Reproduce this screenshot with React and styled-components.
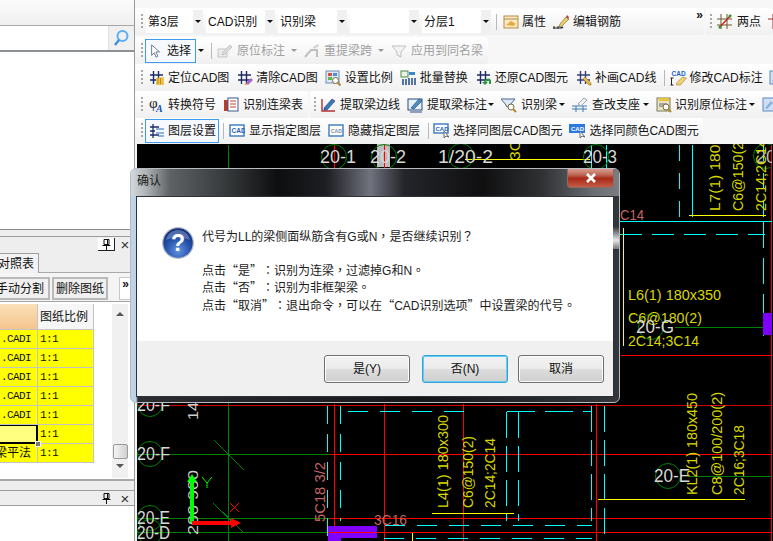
import React from 'react';
import styled, { createGlobalStyle } from 'styled-components';

const Global = createGlobalStyle`
  html, body { margin: 0; padding: 0; background: #f4f4f4; }
  * { box-sizing: border-box; }
`;

const FONT = `"Liberation Sans", "Noto Sans CJK SC", sans-serif`;

const Page = styled.div`
  position: relative;
  width: 773px;
  height: 541px;
  overflow: hidden;
  display: flex;
  font: 12px/16px ${FONT};
  color: #111;
  background: #f6f6f6;
`;

/* ---------- left column ---------- */
const LeftColumn = styled.div`
  width: 135px;
  flex: none;
  display: flex;
  flex-direction: column;
  border-right: 1px solid #9a9a9a;
  background: #eeeeee;
`;
const TopFade = styled.div`
  height: 25px;
  background: linear-gradient(#fbfbfb, #f0f0f0);
`;
const SearchRow = styled.div`
  height: 25px;
  display: flex;
  border-top: 1px solid #a8a8a8;
  background: #f0f0f0;
`;
const SearchInput = styled.div`
  width: 109px;
  background: #fff;
  border-right: 1px solid #e0e0e0;
`;
const SearchIcon = styled.div`
  flex: 1;
  display: flex;
  align-items: center;
  justify-content: center;
  padding-right: 2px;
`;
const TreeArea = styled.div`
  height: 180px;
  background: #fff;
  border-top: 2px solid #8d9196;
  border-bottom: 1px solid #8a8a8a;
`;
const PanelHeader = styled.div`
  display: flex;
  align-items: center;
  justify-content: flex-end;
  height: ${p => p.$h}px;
  margin-top: ${p => p.$mt}px;
  border-top: 1px solid #9c9c9c;
  padding-right: 1px;
  background: #eeeeee;
`;
const PinBox = styled.div`
  width: 17px;
  height: 13px;
  display: flex;
  align-items: center;
  justify-content: center;
  border-right: ${p => (p.$framed ? '1px solid #222' : 'none')};
  border-bottom: ${p => (p.$framed ? '1px solid #222' : 'none')};
  background: ${p => (p.$framed ? '#fff' : 'transparent')};
`;
const CloseMark = styled.span`
  width: 16px;
  text-align: center;
  font: 15px/13px "Liberation Sans", sans-serif;
  color: #333;
  margin-left: 2px;
`;
const TabRow = styled.div`
  height: 20px;
  margin-top: 1px;
  border-bottom: 1px solid #aaa;
`;
const Tab = styled.div`
  width: 39px;
  height: 20px;
  display: flex;
  justify-content: flex-end;
  align-items: center;
  padding-right: 4px;
  overflow: hidden;
  white-space: nowrap;
  background: #f2f2f2;
  border: 1px solid #a0a0a0;
  border-left: none;
  border-bottom: none;
`;
const ActionRow = styled.div`
  height: 29px;
  display: flex;
  align-items: flex-start;
  padding-top: 4px;
  background: #f4f4f4;
  border-bottom: 1px solid #a4a4a4;
`;
const FlatButton = styled.div`
  width: ${p => p.$w}px;
  height: 23px;
  margin-right: 2px;
  display: flex;
  align-items: center;
  justify-content: ${p => (p.$cut ? 'flex-end' : 'center')};
  padding-right: ${p => (p.$cut ? 4 : 0)}px;
  overflow: hidden;
  white-space: nowrap;
  background: #f0f0f0;
  border: 2px solid #b9b9b9;
  border-left-width: ${p => (p.$cut ? 0 : 2)}px;
`;
const Overflow = styled.div`
  width: 13px;
  height: 23px;
  margin-left: 9px;
  background: #fff;
  border: 1px solid #c8c8c8;
  font: bold 12px/12px "Liberation Sans", sans-serif;
  text-align: center;
`;
const GridWrap = styled.div`
  height: 179px;
  display: flex;
  padding: 2px 1px 0 0;
  background: #fff;
  border-bottom: 2px solid #a8a8a8;
`;
const Sheet = styled.div`
  position: relative;
  width: 94px;
  align-self: flex-start;
  display: grid;
  grid-template-columns: 38px 56px;
  grid-template-rows: 26px repeat(7, 19px);
`;
const HeadCell = styled.div`
  display: flex;
  align-items: center;
  padding-left: 2px;
  font-size: 12px;
  background: ${p => (p.$warm ? 'linear-gradient(#fbe0b8, #f5c58e)' : '#f6f6f6')};
  border-right: 1px solid #c4c4c4;
  border-bottom: 1px solid #c4c4c4;
`;
const Cell = styled.div`
  height: 19px;
  display: flex;
  align-items: center;
  justify-content: ${p => (p.$right ? 'flex-end' : 'flex-start')};
  padding: ${p => (p.$right ? '0 6px 0 0' : '0 0 0 2px')};
  overflow: hidden;
  white-space: nowrap;
  font: 11px/16px "Liberation Mono", monospace;
  letter-spacing: -0.6px;
  background: ${p => (p.$selected ? '#ffff80' : '#ffff00')};
  border-right: ${p => (p.$selected ? '2px solid #000' : '1px solid #c4c4c4')};
  border-bottom: ${p => (p.$selected ? '2px solid #000' : '1px solid #c4c4c4')};
  border-top: ${p => (p.$selected ? '1px solid #000' : 'none')};
`;
const CellCJK = styled.span`
  font: 12px/16px ${FONT};
  letter-spacing: 0;
`;
const Handle = styled.div`
  position: absolute;
  left: 35px;
  top: 137px;
  width: 6px;
  height: 6px;
  background: #777;
  border: 1px solid #fff;
`;
const ScrollArea = styled.div`
  flex: 1;
  display: flex;
  justify-content: flex-end;
  padding-right: 5px;
`;
const Scrollbar = styled.div`
  width: 16px;
  height: 174px;
  display: flex;
  flex-direction: column;
  align-items: center;
  background: #f0f0f0;
  padding: 8px 0 6px;
`;
const ScrollFill = styled.div`
  flex: 1;
`;
const Thumb = styled.div`
  width: 15px;
  height: 15px;
  margin-bottom: 5px;
  border: 1px solid #9a9a9a;
  border-radius: 2px;
  background: linear-gradient(90deg, #f4f4f4, #d0d0d0);
`;
const Arrow = styled.div`
  width: 0;
  height: 0;
  border-left: 4px solid transparent;
  border-right: 4px solid transparent;
  border-${p => (p.$down ? 'top' : 'bottom')}: 4px solid #555;
  margin-bottom: 4px;
`;
const BottomPanel = styled.div`
  flex: 1;
  background: #fff;
  border-top: 1px solid #9c9c9c;
`;

/* ---------- right column ---------- */
const RightColumn = styled.div`
  flex: 1;
  min-width: 0;
  display: flex;
  flex-direction: column;
`;
const Toolbars = styled.div`
  height: 144px;
  padding-top: 8px;
  display: flex;
  flex-direction: column;
  background: #f7f7f7;
  overflow: hidden;
`;
const Row = styled.div`
  height: ${p => p.$h || 27}px;
  margin-bottom: ${p => p.$mb || 0}px;
  display: flex;
  gap: 2px;
  flex: none;
`;
const Bar = styled.div`
  width: ${p => (p.$w ? `${p.$w}px` : 'auto')};
  flex: ${p => (p.$grow ? 1 : 'none')};
  height: 100%;
  display: flex;
  align-items: center;
  padding-left: ${p => p.$pl ?? 6}px;
  overflow: hidden;
  white-space: nowrap;
  border-radius: 3px;
  background: linear-gradient(#ffffff, #f0f0f0);
`;
const Grip = styled.div`
  width: 2px;
  height: 16px;
  margin-right: 3px;
  flex: none;
  background: repeating-linear-gradient(#a8a8a8 0 2px, transparent 2px 4px);
`;
const Tool = styled.div`
  display: flex;
  align-items: center;
  flex: none;
  height: 24px;
  gap: ${p => p.$gap ?? 4}px;
  margin-left: ${p => p.$ml ?? 0}px;
  padding: ${p => (p.$active ? `0 ${p.$pr ?? 2}px 0 3px` : '0')};
  color: ${p => (p.$off ? '#a0a0a0' : '#141414')};
  border: ${p => (p.$active ? '1px solid #3f9bf0' : 'none')};
  background: ${p => (p.$active ? '#f6fafe' : 'transparent')};
`;
const Caret = styled.i`
  width: 0;
  height: 0;
  flex: none;
  margin-left: ${p => p.$ml ?? 4}px;
  margin-right: ${p => p.$mr ?? 0}px;
  border-left: 3px solid transparent;
  border-right: 3px solid transparent;
  border-top: 3px solid ${p => (p.$off ? '#999' : '#111')};
`;
const Sep = styled.div`
  width: 1px;
  height: 16px;
  flex: none;
  margin: 0 ${p => p.$mr ?? 5}px 0 ${p => p.$ml ?? 5}px;
  background: #b8b8b8;
`;
const Combo = styled.div`
  width: ${p => p.$w}px;
  height: 23px;
  margin-right: 3px;
  flex: none;
  display: flex;
  align-items: center;
  justify-content: space-between;
  padding-left: 2px;
  background: #fff;
`;
const ComboDrop = styled.div`
  width: 10px;
  height: 100%;
  display: flex;
  align-items: center;
  justify-content: center;
  background: #f0f0f0;
`;
const More = styled.div`
  margin-left: auto;
  margin-right: 1px;
  align-self: flex-start;
  padding-top: 1px;
  font: bold 12px/12px "Liberation Sans", sans-serif;
`;
const Canvas = styled.div`
  flex: 1;
  margin-left: 2px;
  background: #000;
  overflow: hidden;
  svg { display: block; }
`;

/* ---------- dialog ---------- */
const Dialog = styled.div`
  position: absolute;
  left: 130px;
  top: 168px;
  width: 490px;
  height: 235px;
  display: flex;
  flex-direction: column;
  border-radius: 6px;
  border: 1px solid #b8bcc0;
  overflow: hidden;
  background: linear-gradient(90deg, #bcd3ea 0 5px, #2b2d30 7px, #151618 60%, #33363a 100%);
`;
const Glare = styled.div`
  position: absolute;
  right: 0;
  top: 58px;
  width: 6px;
  height: 22px;
  background: linear-gradient(#3a3a3a, #e8e8e8 60%, #777);
`;
const TitleBar = styled.div`
  position: relative;
  height: 27px;
  flex: none;
  padding: 4px 0 0 6px;
  font-size: 12px;
  color: #1a1a1a;
  background: linear-gradient(90deg, #d3dade 0, #b0b4b6 3%, #5f6264 8%, #3c3f41 18%, #0d0e0f 30%, #1d1e22 40%, #70727e 49%, #24252a 56%, #0f0f10 72%, #2e3032 84%, #6b6f73 95%, #7a7d80 100%);
`;
const CloseButton = styled.div`
  position: absolute;
  right: 5px;
  top: -1px;
  width: 47px;
  height: 20px;
  display: flex;
  align-items: center;
  justify-content: center;
  border: 1px solid #8a6a64;
  border-top: none;
  border-radius: 0 0 4px 4px;
  background: linear-gradient(#d8a59a 0, #c06a58 35%, #a82a18 55%, #c35c48 100%);
`;
const Client = styled.div`
  flex: 1;
  margin: 0 5px 5px;
  display: flex;
  flex-direction: column;
  border: 1px solid #2e3236;
  background: #fff;
`;
const Message = styled.div`
  flex: 1;
  display: flex;
  padding: 30px 0 0 25px;
  gap: 8px;
`;
const MessageText = styled.div`
  line-height: 17.5px;
  color: #1c1c1c;
  text-spacing-trim: space-all;
`;
const Line = styled.div`
  height: 17.5px;
  margin-bottom: ${p => p.$mb || 0}px;
  white-space: nowrap;
`;
const Mark = styled.span`
  font-family: "Noto Sans CJK TC", sans-serif;
`;
const Footer = styled.div`
  height: 55px;
  flex: none;
  display: flex;
  justify-content: flex-end;
  align-items: flex-start;
  gap: 10px;
  padding: 14px 9px 0 0;
  background: #f0f0f0;
`;
const DlgButton = styled.div`
  width: 86px;
  height: 28px;
  margin-right: ${p => p.$mr || 0}px;
  display: flex;
  align-items: center;
  justify-content: center;
  font-size: 12px;
  border-radius: 3px;
  border: 1px solid ${p => (p.$primary ? '#3a9fd6' : '#707070')};
  box-shadow: inset 0 0 0 1px ${p => (p.$primary ? '#5fd0f5' : '#fbfbfb')};
  background: linear-gradient(#f2f2f2 0, #ebebeb 48%, #dddddd 50%, #cfcfcf 100%);
`;

const marked = text =>
  text.split(/([“”，。：？])/).map((part, i) =>
    /^[“”，。：？]$/.test(part) ? <Mark key={i}>{part}</Mark> : part
  );

/* ---------- icons ---------- */
const NAVY = '#1c2a66';
const Hash = ({ c = NAVY }) => <path d="M4.5 1v13M9.5 1v13M1 5h13M1 10h13" stroke={c} strokeWidth="1.4" fill="none" />;
const ICONS = {
  cursor: <path d="M3 1l0 12 3-3 2 5 2-1-2-5h4z" fill="#fff" stroke="#5a6c86" />,
  orig: <g opacity=".45"><path d="M1 14V6h9v8z" fill="#ddd" stroke="#888" /><path d="M6 9l7-7 2 2-7 7-3 1z" fill="#bbb" stroke="#888" /></g>,
  span: <g opacity=".5"><path d="M1 14l6-7h6v7" fill="none" stroke="#888" strokeWidth="2" /><path d="M9 4l5-3 1 2-5 3z" fill="#aaa" /></g>,
  apply: <g opacity=".5"><path d="M1 3h14l-5 6v5l-4-2V9z" fill="#eee" stroke="#888" /></g>,
  locate: <g><Hash /><path d="M7 8l8-1v8H7z" fill="#eec24c" /><path d="M9 8v6M11.5 8v6" stroke="#b88a1c" /></g>,
  clear: <g><Hash /><path d="M9 13l5-5 2 2-5 5z" fill="#a968c8" /><path d="M7 15l2-2 2 2z" fill="#e7b04a" /></g>,
  scale: <g><rect x="1" y="1" width="13" height="12" fill="#dce8f6" stroke="#6d8db3" /><rect x="3" y="3" width="4" height="3" fill="#d84f3c" /><rect x="8" y="3" width="4" height="3" fill="#4a90d8" /><rect x="3" y="7" width="4" height="3" fill="#5fb84c" /><circle cx="10.5" cy="10.5" r="3" fill="#fff" stroke="#7a6a3a" /><path d="M12.5 12.5l3 3" stroke="#b08a30" strokeWidth="2" /></g>,
  batch: <g><rect x="1" y="1" width="7" height="6" fill="#eaf3e4" stroke="#4a8a4a" /><path d="M9 2h6v3H9z" fill="#3a8ad0" /><path d="M3 9v6M6 9v6M9 8v7M12 8v7M15 8v7" stroke="#1c4a8a" strokeWidth="1.5" /></g>,
  restore: <g><Hash /><path d="M8 12a4 4 0 0 1 7-2v4h-2v-3a2 2 0 0 0-3 1l2 0-3 3-3-3z" fill="#2e9a3c" /></g>,
  patch: <g><Hash c="#32407a" /><path d="M7 9l2-2 6 6 0 2-2 0z" fill="#e8b84a" stroke="#8a6a1c" strokeWidth=".6" /></g>,
  modify: <g><text x="1" y="6" fontFamily="Liberation Sans" fontSize="6.5" fontWeight="700" fill="#1d5fc0">CAD</text><path d="M1 8v7M0 8h3M0 15h3" stroke="#222" /><path d="M6 13l6-6 4 1-6 7H6z" fill="#f0d070" stroke="#a08030" strokeWidth=".6" /></g>,
  phi: <g><text x="0" y="11" fontFamily="Liberation Serif" fontSize="15" fill="#222">φ</text><text x="7" y="15" fontFamily="Liberation Serif" fontSize="10" fontStyle="italic" fontWeight="700" fill="#2050b0">A</text></g>,
  table: <g><rect x="1" y="3" width="7" height="11" fill="#b83c2c" /><rect x="5" y="1" width="10" height="13" fill="#fff" stroke="#3a5a90" /><path d="M7 4h6M7 7h6M7 10h6" stroke="#c04030" /></g>,
  edge: <g><path d="M2 2v12h13" fill="none" stroke="#b03030" strokeWidth="1.4" /><path d="M4 11l8-9 3 2-8 9-3 0z" fill="#3a78b8" stroke="#1c3a70" strokeWidth=".6" /></g>,
  mark: <g><rect x="1" y="2" width="14" height="11" fill="#e8f0fa" stroke="#2a4a80" /><path d="M3 15h12" stroke="#2a4a80" /><path d="M4 11l8-9 3 2-8 8z" fill="#4a90c8" stroke="#1c3a70" strokeWidth=".6" /></g>,
  identify: <g><path d="M0 2h14l-5 6v3L5 9V8z" fill="#dde8f4" stroke="#4a6a90" /><circle cx="10" cy="10" r="3" fill="#fff" stroke="#7a6a3a" /><path d="M12 12l3 3" stroke="#b08a30" strokeWidth="2" /></g>,
  support: <g><path d="M0 9h15M0 12h15" stroke="#3a78b8" /><path d="M4 9v6M11 9v6" stroke="#3a78b8" /><path d="M6 7l6-6 3 2-6 6z" fill="#eef2f6" stroke="#9aa" /></g>,
  origin: <g><rect x="1" y="1" width="13" height="13" fill="#e8e2c0" stroke="#7a7a5a" /><rect x="3" y="1" width="10" height="3" fill="#e8c43c" /><path d="M3 7h8M3 9h6" stroke="#668" /><circle cx="10" cy="10" r="3" fill="#fff" stroke="#7a6a3a" /><path d="M12 12l3 3" stroke="#b08a30" strokeWidth="2" /></g>,
  layers: <g><path d="M4 1v14M1 4h9M1 8h5M1 12h9" stroke={NAVY} strokeWidth="1.3" /><path d="M7 6h8M7 10h8M9 13h6" stroke="#2a6ac0" strokeWidth="1.2" /></g>,
  show: <g><rect x="1" y="2" width="14" height="11" fill="#fff" stroke="#3a78c0" strokeWidth="1.4" /><text x="2.5" y="10" fontFamily="Liberation Sans" fontSize="6.5" fontWeight="700" fill="#1d5fc0">CAD</text></g>,
  hide: <g><rect x="1" y="2" width="14" height="11" fill="#fff" stroke="#3a78c0" strokeWidth="1.4" /><text x="3" y="9.5" fontFamily="Liberation Sans" fontSize="5" fontWeight="700" fill="#7a8aa0">CAD</text></g>,
  sameLayer: <g><rect x="1" y="1" width="14" height="9" fill="#fff" stroke="#3a78c0" strokeWidth="1.4" /><text x="2.5" y="8" fontFamily="Liberation Sans" fontSize="6" fontWeight="700" fill="#1d5fc0">CAD</text><path d="M11 8v7l2-2 3 1z" fill="#fff" stroke="#667" /></g>,
  sameColor: <g><rect x="0" y="1" width="16" height="9" fill="#2a7ae0" /><text x="2" y="8" fontFamily="Liberation Sans" fontSize="6" fontWeight="700" fill="#fff">CAD</text><path d="M11 8v7l2-2 3 1z" fill="#fff" stroke="#667" /></g>,
  prop: <g><rect x="1" y="2" width="14" height="12" fill="#fbe9c4" stroke="#b58a44" /><path d="M1 5h14" stroke="#b58a44" /><path d="M3 11l5-4 5 3-3 2z" fill="#e8a93c" /></g>,
  rebar: <g><path d="M0 14h7c2 0 3-1 3-1" fill="none" stroke="#222" strokeWidth="1.2" /><path d="M1 12v3M5 12v3" stroke="#222" /><path d="M7 10l6-7 3 2-7 7-3 1z" fill="#e8d070" stroke="#7a5a1c" strokeWidth=".6" /><path d="M13 3l1-2 2 2-1 2z" fill="#c04040" /></g>,
  twoPoint: <g><path d="M4 0v15M10 0v15M0 5h15M0 11h15" stroke="#6a5a2a" /><path d="M2 14L14 1" stroke="#d02020" strokeWidth="1.4" /><circle cx="3" cy="13" r="1.5" fill="#2a9a2a" /><circle cx="13" cy="2" r="1.5" fill="#2a9a2a" /></g>,
  more: <path d="M5 0v15M11 0v15M0 5h15" stroke="#a03030" />,
  win: <g><rect x="1" y="1" width="14" height="13" fill="#cfe0f4" stroke="#5a8ac0" /><path d="M3 11l6-7 2 2-6 6z" fill="#8ab0dc" /></g>,
};
const Icon = ({ n, w = 16 }) => (
  <svg width={w} height="16" viewBox="0 0 16 16" style={{ flex: 'none' }}>{ICONS[n]}</svg>
);

const Q = () => (
  <svg width="32" height="32" viewBox="0 0 32 32" style={{ flex: 'none' }}>
    <defs>
      <radialGradient id="qb" cx="50%" cy="75%" r="70%">
        <stop offset="0" stopColor="#5f93e0" />
        <stop offset="0.6" stopColor="#234fa8" />
        <stop offset="1" stopColor="#12307a" />
      </radialGradient>
    </defs>
    <circle cx="16" cy="16" r="15.3" fill="url(#qb)" stroke="#b4bcc8" strokeWidth="1.2" />
    <path d="M4 13C6 5 12 3 16 3s10 2 12 10c-7-3-17-3-24 0z" fill="#fff" opacity=".25" />
    <text x="16" y="24" textAnchor="middle" fontFamily="Liberation Sans" fontWeight="700" fontSize="23" fill="#fff">?</text>
  </svg>
);

/* ---------- CAD drawing ---------- */
const RED = '#ff0000', DRED = '#d40000', CY = '#00ffff', GR = '#008000', YE = '#ffff00';
const D1 = '16 12', D2 = '22 10';
const WHITE = '#d8d8d8';
const LINES = [
  [229, 144, 229, 541, GR],
  [335, 144, 335, 170, RED], [385, 144, 385, 170, RED],
  [465, 159, 590, 159, YE],
  [592, 144, 592, 170, CY], [607, 144, 607, 170, CY],
  [772, 144, 772, 541, RED], [680, 144, 680, 216, CY, D1], [693, 144, 693, 216, CY],
  [764, 144, 764, 216, CY, D1],
  [689, 215, 766, 215, YE],
  [620, 221, 773, 221, CY],
  [620, 234, 765, 234, CY, D2],
  [764, 221, 764, 335, CY, '26 10'],
  [624, 227, 624, 345, YE],
  [675, 327, 764, 327, GR],
  [621, 355, 773, 355, RED],
  [620, 405, 773, 405, DRED], [138, 405, 620, 405, DRED],
  [138, 454, 330, 454, GR], [330, 454, 773, 454, RED],
  [138, 518, 330, 518, GR], [330, 518, 773, 518, RED],
  [138, 532, 330, 532, GR], [330, 532, 773, 532, RED],
  [335, 403, 335, 541, RED], [385, 403, 385, 541, RED], [464, 403, 464, 541, RED], [597, 403, 597, 541, RED],
  [328, 405, 328, 541, CY, '18 10'], [341, 405, 341, 520, CY, '18 10'],
  [348, 411, 465, 411, CY, '20 12'],
  [507, 411, 592, 411, CY, '28 10'],
  [507, 411, 507, 520, CY, '26 8'], [519, 411, 519, 520, CY, '26 8'],
  [592, 405, 592, 520, CY, '26 8'], [605, 405, 605, 541, CY, '26 8'],
  [598, 499, 745, 499, YE], [432, 513, 514, 513, YE],
  [385, 525, 592, 525, CY, '20 12'], [384, 538, 592, 538, CY, '20 12'],
  [413, 532, 413, 541, YE],
  [690, 476, 772, 476, GR],
  [215, 440, 245, 470, GR], [214, 503, 245, 533, GR],
];
const CIRCLES = [[335, 157], [385, 157], [462, 156], [597, 157], [767, 156], [652, 327], [669, 476], [151, 454], [151, 518], [151, 532], [151, 404]];
const HTEXT = [
  ['20-1', 321, 157, 36, WHITE, 18], ['20-2', 371, 157, 36, WHITE, 18], ['1/20-2', 439, 157, 55, WHITE, 18],
  ['20-3', 584, 157, 34, WHITE, 18], ['20', 757, 157, 20, '#bbb', 18],
  ['C14', 621, 215, 24, '#c86464', 15],
  ['L6(1) 180x350', 629, 295, 93, '#d8d800', 15], ['C6@180(2)', 629, 318, 74, '#d8d800', 15], ['2C14;3C14', 629, 341, 71, '#d8d800', 15],
  ['20-G', 637, 327, 38, WHITE, 18], ['20-E', 655, 476, 36, WHITE, 18],
  ['20-F', 138, 405, 33, WHITE, 18], ['20-F', 138, 454, 33, WHITE, 18],
  ['20-E', 138, 518, 33, WHITE, 18], ['20-D', 138, 533, 33, WHITE, 18],
  ['3C16', 375, 520, 33, '#c86464', 15],
];
const VTEXT = [
  ['3C', 516, 160, 20, '#d8d800'],
  ['L7(1) 180x350', 716, 211, 100, '#d8d800'], ['C6@150(2)', 739, 211, 74, '#d8d800'], ['2C14;2C14', 762, 211, 72, '#d8d800'],
  ['KL2(1) 180x450', 693, 495, 102, '#d8d800'], ['C8@100/200(2)', 718, 495, 103, '#d8d800'], ['2C16;3C18', 740, 495, 70, '#d8d800'],
  ['L4(1) 180x300', 444, 508, 93, '#d8d800'], ['C6@150(2)', 469, 508, 72, '#d8d800'], ['2C14;2C14', 491, 508, 70, '#d8d800'],
  ['5C18 3/2', 321, 522, 60, '#c86464'], ['200 900', 194, 535, 65, '#ccc'], ['14', 194, 420, 18, '#ccc'],
];
const CADFONT = 'Liberation Sans, sans-serif';
const Drawing = () => (
  <svg width="635" height="397" viewBox="138 144 635 397">
    <rect x="378" y="144" width="13" height="23" fill="#bdbdbd" />
    {LINES.map(([a, b, c, d, col, dash], i) => (
      <line key={i} x1={a + 0.5} y1={b + 0.5} x2={c + 0.5} y2={d + 0.5} stroke={col} strokeDasharray={dash} shapeRendering="crispEdges" />
    ))}
    {CIRCLES.map(([x, y], i) => <circle key={i} cx={x} cy={y} r="12.5" fill="none" stroke={GR} />)}
    {HTEXT.map(([t, x, y, len, col, fs], i) => (
      <text key={i} x={x} y={y + fs * 0.36} fontFamily={CADFONT} fontSize={fs} fill={col} textLength={len} lengthAdjust="spacingAndGlyphs">{t}</text>
    ))}
    {VTEXT.map(([t, x, y, len, col], i) => (
      <text key={i} transform={`translate(${x + 5.4} ${y}) rotate(-90)`} fontFamily={CADFONT} fontSize="15" fill={col} textLength={len} lengthAdjust="spacingAndGlyphs">{t}</text>
    ))}
    <rect x="329" y="526" width="49" height="12" fill="#8000ff" />
    <rect x="329" y="538" width="13" height="3" fill="#8000ff" />
    <line x1="329" y1="532.5" x2="378" y2="532.5" stroke={RED} />
    <rect x="764" y="313" width="9" height="22" fill="#8000ff" />
    <path d="M191 523V482h-3l5-8 5 8h-3v41z" fill="#00ff00" />
    <path d="M193 521h39v-3l10 5-10 5v-3h-39z" fill="#ff0000" />
    <path d="M203 477l5 6 5-6M208 483v5" fill="none" stroke="#00ff00" />
    <path d="M231 503l9 9M240 503l-9 9" fill="none" stroke="#ff0000" />
  </svg>
);

/* ---------- data ---------- */
const SHEET_ROWS = ['.CADI', '.CADI', '.CADI', '.CADI', '.CADI', '', '梁平法'];

const Pin = () => (
  <svg width="9" height="11" viewBox="0 0 9 11"><path d="M2 .5h5v5H2zM5.5 1v4.5M.5 6.5h8M4.5 7v4" fill="none" stroke="#111" /></svg>
);

export default function App() {
  return (
    <Page>
      <Global />
      <LeftColumn>
        <TopFade />
        <SearchRow>
          <SearchInput />
          <SearchIcon>
            <svg width="18" height="18" viewBox="0 0 18 18">
              <circle cx="10.5" cy="7" r="5" fill="none" stroke="#58aef0" strokeWidth="2" />
              <path d="M7 11l-4 5" stroke="#3c8fd8" strokeWidth="2.4" />
            </svg>
          </SearchIcon>
        </SearchRow>
        <TreeArea />
        <PanelHeader $h={16} $mt={6}>
          <PinBox $framed><Pin /></PinBox>
          <CloseMark>×</CloseMark>
        </PanelHeader>
        <TabRow><Tab>对照表</Tab></TabRow>
        <ActionRow>
          <FlatButton $w={50} $cut>手动分割</FlatButton>
          <FlatButton $w={56}>删除图纸</FlatButton>
          <Overflow>»</Overflow>
        </ActionRow>
        <GridWrap>
          <Sheet>
            <HeadCell $warm />
            <HeadCell>图纸比例</HeadCell>
            {SHEET_ROWS.map((name, i) => (
              <React.Fragment key={i}>
                <Cell $right $selected={i === 5}>
                  {i === 6 ? <CellCJK>{name}</CellCJK> : name}
                </Cell>
                <Cell>1:1</Cell>
              </React.Fragment>
            ))}
            <Handle />
          </Sheet>
          <ScrollArea>
            <Scrollbar>
              <Arrow />
              <ScrollFill />
              <Thumb />
              <Arrow $down />
            </Scrollbar>
          </ScrollArea>
        </GridWrap>
        <PanelHeader $h={15} $mt={9}>
          <PinBox><Pin /></PinBox>
          <CloseMark>×</CloseMark>
        </PanelHeader>
        <BottomPanel />
      </LeftColumn>

      <RightColumn>
        <Toolbars>
          <Row $h={27} $mb={2}>
            <Bar $w={569}>
              <Grip />
              <Combo $w={57}>第3层<ComboDrop><Caret $ml={0} /></ComboDrop></Combo>
              <Combo $w={69}>CAD识别<ComboDrop><Caret $ml={0} /></ComboDrop></Combo>
              <Combo $w={69}>识别梁<ComboDrop><Caret $ml={0} /></ComboDrop></Combo>
              <Combo $w={69}><span /><ComboDrop><Caret $ml={0} /></ComboDrop></Combo>
              <Combo $w={69}>分层1<ComboDrop><Caret $ml={0} /></ComboDrop></Combo>
              <Sep $ml={2} $mr={6} />
              <Tool $gap={3}><Icon n="prop" />属性</Tool>
              <Tool $ml={7}><Icon n="rebar" />编辑钢筋</Tool>
              <More>»</More>
            </Bar>
            <Bar $grow $pl={4}>
              <Grip />
              <Tool $ml={2}><Icon n="twoPoint" />两点</Tool>
              <Tool $ml={7}><Icon n="more" /></Tool>
            </Bar>
          </Row>
          <Row>
            <Bar $w={353}>
              <Grip />
              <Tool $active $ml={-1} $pr={4}><Icon n="cursor" w={14} />选择</Tool>
              <Caret $ml={2} />
              <Sep $ml={7} $mr={5} />
              <Tool $off><Icon n="orig" />原位标注</Tool>
              <Caret $off $ml={6} $mr={7} />
              <Tool $off><Icon n="span" />重提梁跨</Tool>
              <Caret $off $ml={6} $mr={7} />
              <Tool $off><Icon n="apply" />应用到同名梁</Tool>
            </Bar>
          </Row>
          <Row>
            <Bar $grow>
              <Grip />
              <Tool $ml={3} $gap={3}><Icon n="locate" />定位CAD图</Tool>
              <Tool $ml={8} $gap={3}><Icon n="clear" />清除CAD图</Tool>
              <Tool $ml={7}><Icon n="scale" />设置比例</Tool>
              <Tool $ml={7}><Icon n="batch" />批量替换</Tool>
              <Tool $ml={8} $gap={3}><Icon n="restore" />还原CAD图元</Tool>
              <Tool $ml={8} $gap={3}><Icon n="patch" />补画CAD线</Tool>
              <Sep $ml={8} $mr={5} />
              <Tool $gap={2}><Icon n="modify" w={17} />修改CAD标注</Tool>
              <Tool $ml={6}><Icon n="win" /></Tool>
            </Bar>
          </Row>
          <Row>
            <Bar $w={173}>
              <Grip />
              <Tool $ml={3} $gap={3}><Icon n="phi" />转换符号</Tool>
              <Tool $ml={7}><Icon n="table" />识别连梁表</Tool>
            </Bar>
            <Bar $grow $pl={4}>
              <Grip />
              <Tool $ml={1}><Icon n="edge" />提取梁边线</Tool>
              <Tool $ml={7}><Icon n="mark" />提取梁标注</Tool>
              <Caret $ml={1} />
              <Tool $ml={7}><Icon n="identify" />识别梁</Tool>
              <Caret $ml={2} />
              <Tool $ml={7}><Icon n="support" />查改支座</Tool>
              <Caret $ml={3} />
              <Tool $ml={7} $gap={3}><Icon n="origin" />识别原位标注</Tool>
              <Caret $ml={2} />
              <Tool $ml={7}><Icon n="win" /></Tool>
            </Bar>
          </Row>
          <Row $h={26}>
            <Bar $w={568}>
              <Grip />
              <Tool $active $ml={-1} $gap={3}><Icon n="layers" />图层设置</Tool>
              <Sep $ml={4} $mr={5} />
              <Tool><Icon n="show" />显示指定图层</Tool>
              <Tool $ml={7}><Icon n="hide" />隐藏指定图层</Tool>
              <Sep $ml={8} $mr={4} />
              <Tool><Icon n="sameLayer" />选择同图层CAD图元</Tool>
              <Tool $ml={7}><Icon n="sameColor" />选择同颜色CAD图元</Tool>
            </Bar>
          </Row>
        </Toolbars>
        <Canvas><Drawing /></Canvas>
      </RightColumn>

      <Dialog>
        <Glare />
        <TitleBar>
          确认
          <CloseButton>
            <svg width="14" height="10" viewBox="0 0 14 10"><path d="M3 1l8 8M11 1l-8 8" stroke="#fff" strokeWidth="2.6" /></svg>
          </CloseButton>
        </TitleBar>
        <Client>
          <Message>
            <Q />
            <MessageText>
              <Line $mb={16}>{marked('代号为LL的梁侧面纵筋含有G或N，是否继续识别？')}</Line>
              <Line>{marked('点击“是”：识别为连梁，过滤掉G和N。')}</Line>
              <Line>{marked('点击“否”：识别为非框架梁。')}</Line>
              <Line>{marked('点击“取消”：退出命令，可以在“CAD识别选项”中设置梁的代号。')}</Line>
            </MessageText>
          </Message>
          <Footer>
            <DlgButton $mr={2}>是(Y)</DlgButton>
            <DlgButton $primary>否(N)</DlgButton>
            <DlgButton>取消</DlgButton>
          </Footer>
        </Client>
      </Dialog>
    </Page>
  );
}
